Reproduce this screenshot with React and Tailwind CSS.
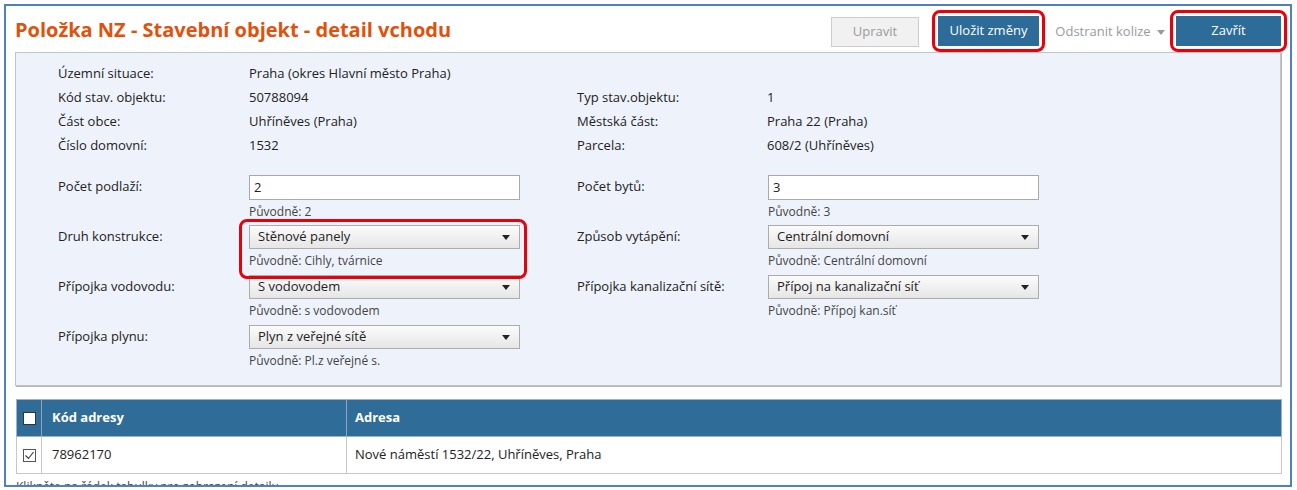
const info = [
  { l: 'Územní situace:', v: 'Praha (okres Hlavní město Praha)' },
  { l: 'Kód stav. objektu:', v: '50788094', l2: 'Typ stav.objektu:', v2: '1' },
  { l: 'Část obce:', v: 'Uhříněves (Praha)', l2: 'Městská část:', v2: 'Praha 22 (Praha)' },
  { l: 'Číslo domovní:', v: '1532', l2: 'Parcela:', v2: '608/2 (Uhříněves)' },
]

const form = [
  [
    { l: 'Počet podlaží:', v: '2', o: '2', input: true },
    { l: 'Počet bytů:', v: '3', o: '3', input: true },
  ],
  [
    { l: 'Druh konstrukce:', v: 'Stěnové panely', o: 'Cihly, tvárnice', mark: true },
    { l: 'Způsob vytápění:', v: 'Centrální domovní', o: 'Centrální domovní' },
  ],
  [
    { l: 'Přípojka vodovodu:', v: 'S vodovodem', o: 's vodovodem' },
    { l: 'Přípojka kanalizační sítě:', v: 'Přípoj na kanalizační síť', o: 'Přípoj kan.síť' },
  ],
  [{ l: 'Přípojka plynu:', v: 'Plyn z veřejné sítě', o: 'Pl.z veřejné s.' }, null],
]

function Caret() {
  return <span className="h-0 w-0 border-x-[4px] border-t-[5px] border-x-transparent border-t-[#222]" />
}

function Field({ f }) {
  const control = f.input ? (
    <div className="flex h-[25px] w-[271px] items-center border border-[#a9a9a9] bg-white pl-[4px]">{f.v}</div>
  ) : (
    <div className="flex h-[24px] w-[271px] items-center justify-between border border-[#acacac] bg-gradient-to-b from-[#fbfbfb] to-[#e6e6e6] pl-[8px] pr-[9px]">
      <span>{f.v}</span>
      <Caret />
    </div>
  )
  const hint = <div className="mt-[3px] text-[12px] leading-[17px] text-[#444]">Původně: {f.o}</div>
  return (
    <div className="flex h-[50px]">
      <div className="w-[191px] pt-[1px] leading-[20px]">{f.l}</div>
      {f.mark ? (
        <div className="relative">
          <div className="absolute -left-[10px] -right-[7px] -top-[6px] -bottom-[4px] rounded-[8px] border-[3px] border-[#e8000b]" />
          {control}
          {hint}
        </div>
      ) : (
        <div>
          {control}
          {hint}
        </div>
      )}
    </div>
  )
}

function Check({ on }) {
  return (
    <span className={`flex h-[13px] w-[13px] items-center justify-center border ${on ? 'border-[#555] bg-white' : 'border-[#333] bg-white'}`}>
      {on && (
        <svg width="11" height="11" viewBox="0 0 11 11">
          <path d="M1.5 5.5 L4.5 8.5 L9.5 2" fill="none" stroke="#333" strokeWidth="1.1" />
        </svg>
      )}
    </span>
  )
}

export default function App() {
  return (
    <div className="h-[490px] w-[1297px] bg-white pl-[4px] pt-[4px] text-[13px] text-[#222]" style={{ fontFamily: '"Open Sans", "Noto Sans", sans-serif' }}>
      <div className="h-[483px] w-[1288px] overflow-hidden border-2 border-[#4f81bd] bg-white">
        <div className="flex h-[46px] items-start">
          <h1 className="ml-[9px] mt-[10px] text-[20px] font-bold leading-[28px] text-[#e0520c]">
            Položka NZ - Stavební objekt - detail vchodu
          </h1>
          <div className="ml-auto mt-[11px] flex h-[30px] w-[88px] items-center justify-center border border-[#cdcdcd] bg-[#f1f1f1] text-[#9a9a9a]">
            Upravit
          </div>
          <div className="relative z-10 ml-[13px] mt-[4px] rounded-[8px] border-[3px] border-[#e8000b] p-[3px]">
            <div className="flex h-[30px] w-[101px] items-center justify-center bg-[#2d6b99] text-white">Uložit změny</div>
          </div>
          <div className="ml-[5px] mt-[11px] flex h-[30px] w-[120px] items-center justify-center gap-[6px] text-[#9a9a9a]">
            Odstranit kolize
            <span className="h-0 w-0 border-x-[4px] border-t-[5px] border-x-transparent border-t-[#9a9a9a]" />
          </div>
          <div className="relative z-10 mr-[3px] mt-[4px] rounded-[8px] border-[3px] border-[#e8000b] p-[3px]">
            <div className="flex h-[30px] w-[105px] items-center justify-center bg-[#2d6b99] text-white">Zavřít</div>
          </div>
        </div>

        <div className="ml-[9px] h-[334px] w-[1266px] border border-[#c4c4c4] bg-[#eef3fb] pl-[42px] pt-[9px] shadow-[1px_1px_0_#b5b5b5]">
          {info.map((r) => (
            <div key={r.l} className="flex h-[24px] items-center">
              <div className="w-[191px]">{r.l}</div>
              <div className="w-[328px]">{r.v}</div>
              {r.l2 && (
                <>
                  <div className="w-[190px]">{r.l2}</div>
                  <div>{r.v2}</div>
                </>
              )}
            </div>
          ))}
          <div className="mt-[17px]">
            {form.map((row, i) => (
              <div key={i} className="grid grid-cols-[519px_1fr]">
                <Field f={row[0]} />
                {row[1] ? <Field f={row[1]} /> : <div />}
              </div>
            ))}
          </div>
        </div>

        <div className="ml-[10px] mt-[13px] w-[1266px]">
          <div className="flex h-[38px] border border-[#9fb3c4] bg-[#2f6d98] font-bold text-white">
            <div className="flex w-[25px] items-center justify-center border-r border-[#8aa6bf]">
              <Check />
            </div>
            <div className="flex w-[305px] items-center border-r border-[#8aa6bf] pl-[10px]">Kód adresy</div>
            <div className="flex flex-1 items-center pl-[8px]">Adresa</div>
          </div>
          <div className="flex h-[37px] border-x border-b border-[#c8c8c8] bg-white">
            <div className="flex w-[25px] items-center justify-center border-r border-[#c8c8c8]">
              <Check on />
            </div>
            <div className="flex w-[305px] items-center border-r border-[#c8c8c8] pl-[10px]">78962170</div>
            <div className="flex flex-1 items-center pl-[8px]">Nové náměstí 1532/22, Uhříněves, Praha</div>
          </div>
          <div className="mt-[5px] text-[12px] leading-[16px] text-[#444]">Klikněte na řádek tabulky pro zobrazení detailu</div>
        </div>
      </div>
    </div>
  )
}
